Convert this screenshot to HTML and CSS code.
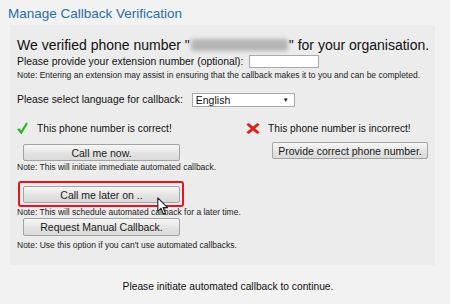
FILE: index.html
```html
<!DOCTYPE html>
<html>
<head>
<meta charset="utf-8">
<link rel="stylesheet" href="styles.css">
</head>
<body>
<div class="page">
  <h1 class="title">Manage Callback Verification</h1>
  <div class="panel">
    <div class="headline">We verified phone number "<span class="blur"></span>" for your organisation.</div>
    <div class="ext-row">
      <span class="label">Please provide your extension number (optional):</span>
      <span class="input"></span>
    </div>
    <div class="note first">Note: Entering an extension may assist in ensuring that the callback makes it to you and can be completed.</div>
    <div class="lang-row">
      <span class="label">Please select language for callback:</span>
      <span class="select">English<span class="arrow">&#9660;</span></span>
    </div>
    <div class="cols">
      <div class="col left">
        <div class="status">
          <svg class="icon" width="11" height="13" viewBox="0 0 11 13"><path d="M0.2 7.6 L2.2 5.9 L4.1 8.6 L9.1 0.4 L10.9 1.6 L4.4 12.6 Z" fill="#2fb52b"/></svg>
          <span>This phone number is correct!</span>
        </div>
        <button class="btn now">Call me now.</button>
        <div class="note n2">Note: This will initiate immediate automated callback.</div>
        <div class="highlight"><button class="btn">Call me later on ..</button>
          <svg class="cursor" width="12" height="19" viewBox="0 0 12 19"><path d="M0.8 0.8 L0.8 14.2 L4 11.3 L6.4 17.2 L8.5 16.3 L6.1 10.6 L10.6 10.6 Z" fill="#fff" stroke="#1e1e1e" stroke-width="1.1" stroke-linejoin="round"/></svg>
        </div>
        <div class="note n3">Note: This will schedule automated callback for a later time.</div>
        <button class="btn manual">Request Manual Callback.</button>
        <div class="note n4">Note: Use this option if you can't use automated callbacks.</div>
      </div>
      <div class="col right">
        <div class="status">
          <svg class="icon" width="14" height="11" viewBox="0 0 14 11"><path d="M0.3 1.5 L2.6 0 L7 3.6 L11.4 0 L13.7 1.5 L9.3 5.5 L13.7 9.5 L11.4 11 L7 7.4 L2.6 11 L0.3 9.5 L4.7 5.5 Z" fill="#e0201a"/></svg>
          <span>This phone number is incorrect!</span>
        </div>
        <button class="btn provide">Provide correct phone number.</button>
      </div>
    </div>
  </div>
  <div class="footer">Please initiate automated callback to continue.</div>
</div>
</body>
</html>
```
FILE: styles.css
```css
html, body {
  margin: 0;
  padding: 0;
}
body {
  width: 450px;
  height: 304px;
  overflow: hidden;
  background: #f2f2f2;
  font-family: "Liberation Sans", Arial, sans-serif;
  color: #1a1a1a;
}
.page {
  padding: 6px 15px 0 10px;
}
.title {
  margin: 0 0 0 -2px;
  font-size: 13.5px;
  font-weight: normal;
  color: #2b6ea3;
  line-height: 16px;
}
.panel {
  box-sizing: border-box;
  margin-top: 3px;
  height: 240px;
  background: #ececec;
  padding: 11px 7px 0 7px;
}
.headline {
  font-size: 14px;
  line-height: 18px;
  color: #111;
  white-space: nowrap;
}
.blur {
  display: inline-block;
  width: 97px;
  height: 12px;
  vertical-align: -1px;
  margin: 0 1px;
  background: #b4b4b4;
  filter: blur(2px);
  border-radius: 3px;
}
.label {
  font-size: 10.4px;
  line-height: 15px;
  color: #111;
}
.ext-row {
  display: flex;
  align-items: center;
  gap: 6px;
  height: 15px;
}
.input {
  display: inline-block;
  box-sizing: border-box;
  width: 70px;
  height: 13px;
  background: #fff;
  border: 1px solid #a9a9a9;
}
.note {
  font-size: 8.5px;
  line-height: 10px;
  color: #222;
  white-space: nowrap;
}
.note.first {
  margin-top: 1px;
}
.lang-row {
  display: flex;
  align-items: center;
  gap: 9px;
  margin-top: 13px;
  height: 14px;
}
.lang-row .label {
  line-height: 14px;
}
.select {
  position: relative;
  display: inline-block;
  box-sizing: border-box;
  width: 103px;
  height: 14px;
  line-height: 12px;
  background: #fff;
  border: 1px solid #a9a9a9;
  font-size: 10.5px;
  padding-left: 3px;
  color: #111;
}
.arrow {
  position: absolute;
  right: 5px;
  top: 0;
  font-size: 6px;
  line-height: 12px;
}
.cols {
  display: flex;
  margin-top: 14px;
}
.col.left {
  width: 229px;
  display: flex;
  flex-direction: column;
  align-items: flex-start;
}
.col.right {
  flex: 1;
  display: flex;
  flex-direction: column;
  align-items: flex-end;
}
.status {
  display: flex;
  align-items: center;
  gap: 9px;
  font-size: 10.2px;
  height: 15px;
  color: #111;
}
.col.right .status {
  align-self: flex-start;
  gap: 8px;
}
.btn {
  display: block;
  box-sizing: border-box;
  width: 157px;
  height: 17px;
  padding: 0;
  font-family: "Liberation Sans", Arial, sans-serif;
  font-size: 10.5px;
  color: #1a1a1a;
  background: linear-gradient(#f7f7f7, #e2e2e2 60%, #dadada);
  border: 1px solid #a3a3a3;
  border-radius: 2px;
}
.btn.now {
  margin: 8px 0 0 6px;
}
.btn.provide {
  margin-top: 6px;
  width: 156px;
}
.note.n2 {
  margin-top: 1px;
}
.highlight {
  position: relative;
  margin: 9px 0 0 1px;
  padding: 3px 2px 2px 3px;
  border: 2px solid #e8141a;
  border-radius: 3px;
}
.note.n3 {
  margin-top: 0;
}
.btn.manual {
  margin: 1px 0 0 6px;
  height: 18px;
}
.note.n4 {
  margin-top: 4px;
}
.cursor {
  position: absolute;
  left: 137px;
  top: 14px;
}
.footer {
  text-align: center;
  font-size: 10.25px;
  line-height: 14px;
  margin-top: 15px;
  padding-left: 11px;
  color: #111;
}
```
